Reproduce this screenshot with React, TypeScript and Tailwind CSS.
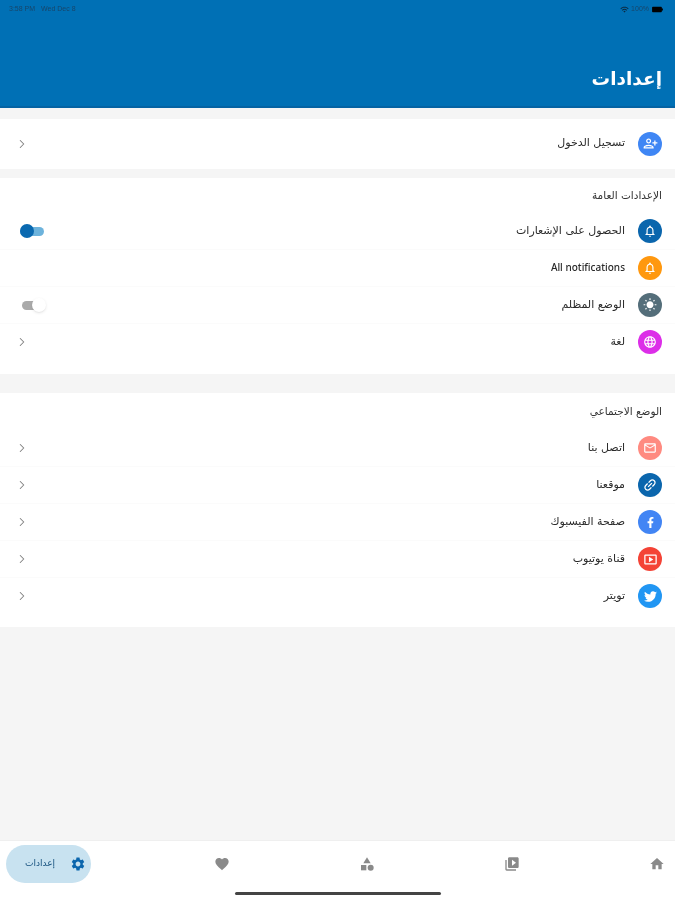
import React from 'react';
import { ChevronRight } from 'lucide-react';
import { FaFacebookF, FaTwitter } from 'react-icons/fa';
import {
  MdBatteryFull,
  MdCategory,
  MdFavorite,
  MdHome,
  MdLanguage,
  MdLink,
  MdMailOutline,
  MdOutlineNotifications,
  MdOutlinePersonAddAlt1,
  MdOutlineSmartDisplay,
  MdSettings,
  MdVideoLibrary,
  MdWbSunny,
  MdWifi,
} from 'react-icons/md';

type RowProps = {
  icon: React.ReactNode;
  color: string;
  label: React.ReactNode;
  trailing?: React.ReactNode;
};

const Chevron = () => <ChevronRight size={14} strokeWidth={1.8} className="text-[#808080] ml-[1px]" />;

const Row: React.FC<RowProps> = ({ icon, color, label, trailing }) => (
  <div className="flex items-center h-[37px] pr-[13px] pl-[14px] border-b border-[#fbfbfb] last:border-transparent">
    <div className={`w-[24px] h-[24px] rounded-full flex items-center justify-center text-white ${color}`}>{icon}</div>
    <span className="mr-[13px] mb-[2px] text-[11px] text-[#2a2a2a] leading-none">{label}</span>
    <div className="mr-auto flex items-center">{trailing}</div>
  </div>
);

const OnToggle = () => (
  <div className="relative w-[24px] h-[9px] ml-[6px] rounded-full bg-[#6db3dc]">
    <div className="absolute left-[0px] -top-[2.5px] w-[14px] h-[14px] rounded-full bg-[#0a69b0]" />
  </div>
);

const OffToggle = () => (
  <div className="relative w-[20px] h-[9px] ml-[8px] rounded-full bg-[#aaaaaa]">
    <div className="absolute left-[10px] -top-[2.5px] w-[14px] h-[14px] rounded-full bg-white shadow-sm" />
  </div>
);

export default function App() {
  return (
    <div
      dir="rtl"
      className="w-[675px] h-[900px] overflow-hidden flex flex-col bg-[#f5f5f5] blur-[0.5px] font-['DejaVu_Sans','Noto_Sans',sans-serif]"
    >
      <header className="h-[108px] bg-[#0070b5] border-b-2 border-[#0563a3] flex flex-col">
        <div dir="ltr" className="flex items-center justify-between h-[16px] mt-[1px] pl-[9px] pr-[11px] text-[#16466b] text-[7px] font-['Liberation_Sans',sans-serif]">
          <span className="flex gap-[6px]">
            <span>3:58 PM</span>
            <span>Wed Dec 8</span>
          </span>
          <span className="flex items-center gap-[2px]">
            <MdWifi size={9} className="text-[#0b2a42]" />
            <span>100%</span>
            <MdBatteryFull size={13} className="rotate-90 text-black" />
          </span>
        </div>
        <h1 className="mt-auto mb-[15px] mr-[13px] text-[18.5px] leading-[24px] font-bold text-white">إعدادات</h1>
      </header>

      <section className="mt-[11px] bg-white h-[50px] flex flex-col justify-center">
        <Row
          icon={<MdOutlinePersonAddAlt1 size={15} />}
          color="bg-[#3f86f4]"
          label="تسجيل الدخول"
          trailing={<Chevron />}
        />
      </section>

      <section className="mt-[9px] bg-white h-[196px]">
        <div className="h-[35px] pr-[13px] flex items-center text-[10.5px] text-[#333]">الإعدادات العامة</div>
        <Row icon={<MdOutlineNotifications size={14} />} color="bg-[#0b66ad]" label="الحصول على الإشعارات" trailing={<OnToggle />} />
        <Row
          icon={<MdOutlineNotifications size={14} />}
          color="bg-[#ff980f]"
          label={<span className="font-['Noto_Sans',sans-serif] text-[10px] font-medium">All notifications</span>}
        />
        <Row icon={<MdWbSunny size={14} />} color="bg-[#546e7a]" label="الوضع المظلم" trailing={<OffToggle />} />
        <Row icon={<MdLanguage size={14} />} color="bg-[#dc2ee8]" label="لغة" trailing={<Chevron />} />
      </section>

      <section className="mt-[19px] bg-white h-[234px]">
        <div className="h-[37px] pr-[13px] flex items-center text-[10.5px] text-[#333]">الوضع الاجتماعي</div>
        <Row icon={<MdMailOutline size={14} />} color="bg-[#ff8a80]" label="اتصل بنا" trailing={<Chevron />} />
        <Row icon={<MdLink size={16} className="-rotate-45" />} color="bg-[#0b66ad]" label="موقعنا" trailing={<Chevron />} />
        <Row icon={<FaFacebookF size={11} />} color="bg-[#4285f4]" label="صفحة الفيسبوك" trailing={<Chevron />} />
        <Row icon={<MdOutlineSmartDisplay size={15} />} color="bg-[#f44336]" label="قناة يوتيوب" trailing={<Chevron />} />
        <Row icon={<FaTwitter size={13} />} color="bg-[#2196f3]" label="تويتر" trailing={<Chevron />} />
      </section>

      <nav dir="ltr" className="relative mt-auto h-[60px] bg-white border-t border-[#efefef] flex items-start pt-[4px] pl-[6px]">
        <div className="w-[86px] h-[38px] rounded-[19px] bg-[#c8e2f0] flex items-center justify-between pl-[19px] pr-[5px] text-[#0b66ad]">
          <span className="text-[9px] text-[#17527f]">إعدادات</span>
          <MdSettings size={16} />
        </div>
        <div className="ml-[113px] h-[38px] flex items-center gap-[109px] text-[#8a8a8a]">
          <span className="w-[36px] flex justify-center"><MdFavorite size={16} /></span>
          <span className="w-[36px] flex justify-center"><MdCategory size={16} /></span>
          <span className="w-[36px] flex justify-center"><MdVideoLibrary size={16} /></span>
          <span className="w-[36px] flex justify-center"><MdHome size={16} /></span>
        </div>
        <div className="absolute left-[235px] bottom-[5px] w-[206px] h-[3px] rounded-full bg-[#444]" />
      </nav>
    </div>
  );
}
